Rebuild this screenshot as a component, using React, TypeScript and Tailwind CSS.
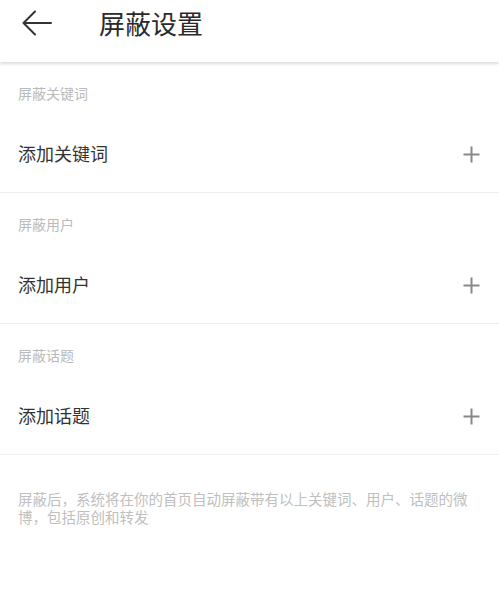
import React from "react";

const sections = [
  { label: "屏蔽关键词", action: "添加关键词" },
  { label: "屏蔽用户", action: "添加用户" },
  { label: "屏蔽话题", action: "添加话题" },
];

function BackArrow() {
  return (
    <svg width="30" height="26" viewBox="0 0 30 26" fill="none">
      <path
        d="M29 13H2M13 1.5L1.5 13L13 24.5"
        stroke="#333"
        strokeWidth="2"
        strokeLinecap="round"
        strokeLinejoin="round"
      />
    </svg>
  );
}

function PlusIcon() {
  return (
    <svg width="17" height="17" viewBox="0 0 17 17" fill="none">
      <path d="M8.5 0.5V16.5M0.5 8.5H16.5" stroke="#888" strokeWidth="2" />
    </svg>
  );
}

export default function App() {
  return (
    <div
      className="min-h-[609px] w-full bg-white"
      style={{ fontFamily: '"Noto Sans CJK SC", "Noto Sans", sans-serif' }}
    >
      <header className="relative z-10 flex h-[62px] items-start bg-white pt-[10px] shadow-[0_2px_3px_rgba(0,0,0,0.14)]">
        <div className="ml-[22px] flex h-[26px] items-center">
          <BackArrow />
        </div>
        <h1 className="ml-[47px] text-[26px] font-normal leading-[26px] text-[#2a2a2a]">屏蔽设置</h1>
      </header>

      {sections.map((s) => (
        <div key={s.label} className="border-b border-[#eeeeee]">
          <div className="h-[54px] pt-[24px] text-[14px] leading-[14px] text-[#bbbbbb] pl-[18px]">
            {s.label}
          </div>
          <div className="flex h-[76px] items-center justify-between pl-[18px] pr-[19px]">
            <span className="-mt-[2px] text-[18px] text-[#333]">{s.action}</span>
            <PlusIcon />
          </div>
        </div>
      ))}

      <p className="px-[18px] pt-[35px] text-[14.5px] leading-[18px] text-[#c0c0c0]">
        屏蔽后，系统将在你的首页自动屏蔽带有以上关键词、用户、话题的微博，包括原创和转发
      </p>
    </div>
  );
}
